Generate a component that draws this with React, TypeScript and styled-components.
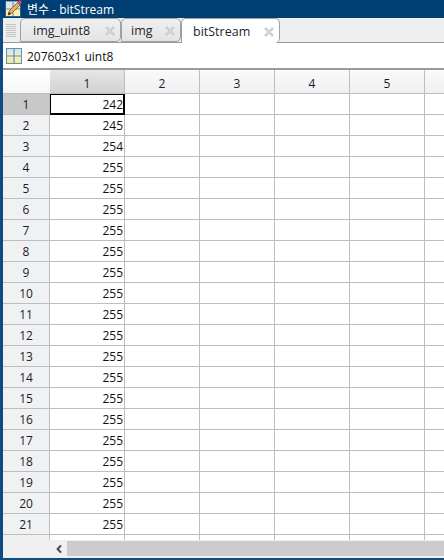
import styled, { createGlobalStyle } from "styled-components";
import { ChevronLeft } from "lucide-react";

const GlobalStyle = createGlobalStyle`
  html, body {
    margin: 0;
    padding: 0;
    background: #fff;
  }
  * {
    box-sizing: border-box;
  }
`;

const values = [242, 245, 254, ...Array(18).fill(255)];
const columns = [1, 2, 3, 4, 5, 6];
const tabs = [
  { name: "img_uint8", width: 101, inset: 12, active: false },
  { name: "img", width: 60, inset: 9, active: false },
  { name: "bitStream", width: 99, inset: 11, active: true },
];

const PencilIcon = () => (
  <svg width="17" height="18" viewBox="0 0 17 18">
    <rect x="0.5" y="1.5" width="15" height="15" fill="#fbeeb0" stroke="#2a5f8f" />
    <path d="M1 1.5H15V8H1Z" fill="#dbe6ee" />
    <path d="M1 9H15M8 2V16" stroke="#5d8db5" />
    <path d="M3 15L4.5 10.5L12.5 2.5L15 5L7 13Z" fill="#eeb050" stroke="#6b4420" strokeWidth="0.7" />
    <path d="M12 2.5L14 0.5H16.5V3L14.5 5Z" fill="#c9487a" />
    <path d="M3 15L3.8 12L6 14Z" fill="#222" />
  </svg>
);

const TableIcon = () => (
  <svg width="16" height="16" viewBox="0 0 16 16">
    <defs>
      <linearGradient id="pane" x1="0" y1="0" x2="0" y2="1">
        <stop offset="0" stopColor="#d3e2ee" />
        <stop offset="0.5" stopColor="#f3efc4" />
        <stop offset="1" stopColor="#ffe67c" />
      </linearGradient>
    </defs>
    <rect x="0.5" y="0.5" width="15" height="15" fill="url(#pane)" stroke="#5b93bd" />
    <path d="M8 1V15M1 8H15" stroke="#5b93bd" strokeWidth="1.2" />
  </svg>
);

const CloseGlyph = () => (
  <svg width="12" height="12" viewBox="0 0 12 12">
    <path d="M2 2L10 10M10 2L2 10" stroke="#c4c4c4" strokeWidth="2.4" />
    <path d="M2.5 2.5L9.5 9.5M9.5 2.5L2.5 9.5" stroke="#e2e2e2" strokeWidth="0.8" />
  </svg>
);

export default function App() {
  return (
    <>
      <GlobalStyle />
      <Window>
        <TitleBar>
          <PencilIcon />
          <TitleText>변수 - bitStream</TitleText>
        </TitleBar>
        <Body>
          <TabStrip>
            <Grip />
            {tabs.map((tab) => (
              <Tab key={tab.name} $active={tab.active} $width={tab.width} $inset={tab.inset}>
                <TabName>{tab.name}</TabName>
                <CloseGlyph />
              </Tab>
            ))}
          </TabStrip>
          <InfoRow>
            <TableIcon />
            <InfoText>207603x1 uint8</InfoText>
          </InfoRow>
          <Sheet>
            <Grid>
              <Corner />
              {columns.map((col) => (
                <ColumnHead key={col} $selected={col === 1}>
                  {col < 6 ? col : ""}
                </ColumnHead>
              ))}
              {values.map((value, i) => (
                <Row key={i}>
                  <RowHead $selected={i === 0}>{i + 1}</RowHead>
                  {columns.map((col) => (
                    <Cell key={col} $selected={i === 0 && col === 1}>
                      {col === 1 ? value : ""}
                    </Cell>
                  ))}
                </Row>
              ))}
              <Row>
                <RowHead />
                {columns.map((col) => (
                  <Cell key={col} />
                ))}
              </Row>
            </Grid>
          </Sheet>
          <ScrollBar>
            <ArrowBox>
              <ChevronLeft size={12} strokeWidth={4} color="#4a4a4a" />
            </ArrowBox>
            <Thumb />
          </ScrollBar>
        </Body>
      </Window>
    </>
  );
}

const Window = styled.div`
  width: 444px;
  height: 560px;
  display: flex;
  flex-direction: column;
  background: #0f4a80;
  overflow: hidden;
`;

const TitleBar = styled.div`
  height: 18px;
  display: flex;
  align-items: center;
  gap: 5px;
  padding: 0 0 0 5px;
  background: #003f73;
  color: #fff;
  flex: none;
`;

const TitleText = styled.span`
  font: 12px "Open Sans", "Noto Sans CJK KR", sans-serif;
`;

const Body = styled.div`
  flex: 1;
  margin: 0 0 2px 3px;
  background: #f0f0f0;
  display: flex;
  flex-direction: column;
  min-height: 0;
`;

const TabStrip = styled.div`
  height: 25px;
  flex: none;
  display: flex;
  align-items: flex-end;
  background: #eeeeee;
  border-bottom: 1px solid #999;
  padding-left: 17px;
  position: relative;
`;

const Grip = styled.div`
  position: absolute;
  left: 3px;
  top: 6px;
  width: 10px;
  height: 14px;
  background: repeating-linear-gradient(#c6c6c6 0 1px, transparent 1px 2px);
`;

const Tab = styled.div<{ $active: boolean; $width: number; $inset: number }>`
  width: ${(p) => p.$width}px;
  height: ${(p) => (p.$active ? 25 : 24)}px;
  margin-bottom: ${(p) => (p.$active ? -1 : 0)}px;
  display: flex;
  align-items: center;
  justify-content: space-between;
  padding: 1px 4px 0 ${(p) => p.$inset}px;
  border: 1px solid #a0a0a0;
  border-bottom: ${(p) => (p.$active ? "none" : "1px solid #a0a0a0")};
  border-radius: 5px 5px 5px 0;
  background: ${(p) => (p.$active ? "#fff" : "linear-gradient(#f0f0f0, #e4e4e4)")};
  position: relative;
  z-index: ${(p) => (p.$active ? 1 : 0)};
`;

const TabName = styled.span`
  font: 12.5px "Open Sans", sans-serif;
  color: #26262e;
`;

const InfoRow = styled.div`
  height: 25px;
  flex: none;
  display: flex;
  align-items: center;
  gap: 5px;
  padding-left: 3px;
  background: #fff;
`;

const InfoText = styled.span`
  font: 12px "Open Sans", sans-serif;
  color: #111;
  padding-top: 1px;
`;

const Sheet = styled.div`
  flex: 1;
  min-height: 0;
  overflow: hidden;
  border-top: 2px solid #9a9a9a;
  background: #fff;
`;

const Grid = styled.div`
  display: grid;
  grid-template-columns: 47px repeat(6, 75px);
  grid-template-rows: 24px;
  grid-auto-rows: 21px;
`;

const Row = styled.div`
  display: contents;
`;

const Corner = styled.div`
  background: linear-gradient(#fff, #f6f6f6);
  border-bottom: 1px solid #bdbdbd;
`;

const ColumnHead = styled.div<{ $selected?: boolean }>`
  display: flex;
  align-items: center;
  justify-content: center;
  padding-top: 3px;
  font: 12px "Open Sans", sans-serif;
  color: #1c1c28;
  background: ${(p) =>
    p.$selected ? "linear-gradient(#e6e6e6, #d2d2d2)" : "linear-gradient(#fafafa, #eff0f2)"};
  border-right: 1px solid #bdbdbd;
  border-bottom: 1px solid #bdbdbd;
`;

const RowHead = styled.div<{ $selected?: boolean }>`
  display: flex;
  align-items: center;
  justify-content: center;
  padding-top: 1px;
  font: 12px "Open Sans", sans-serif;
  color: #1c1c28;
  background: ${(p) => (p.$selected ? "#c8c8c8" : "#f0f1f3")};
  border-right: 1px solid #bdbdbd;
  border-bottom: 1px solid #bdbdbd;
`;

const Cell = styled.div<{ $selected?: boolean }>`
  display: flex;
  align-items: center;
  justify-content: flex-end;
  padding: 1px 1px 0 0;
  font: 12px "Open Sans", sans-serif;
  color: #111;
  background: #fff;
  border-right: 1px solid ${(p) => (p.$selected ? "#000" : "#bdbdbd")};
  border-bottom: 1px solid ${(p) => (p.$selected ? "#000" : "#bdbdbd")};
  box-shadow: ${(p) => (p.$selected ? "inset 0 0 0 1px #000" : "none")};
`;

const ScrollBar = styled.div`
  height: 18px;
  flex: none;
  display: flex;
  background: #f0f0f0;
  padding: 1px 0 2px 47px;
`;

const ArrowBox = styled.div`
  width: 17px;
  display: flex;
  align-items: center;
  justify-content: center;
`;

const Thumb = styled.div`
  flex: 1;
  background: #cccccc;
`;
